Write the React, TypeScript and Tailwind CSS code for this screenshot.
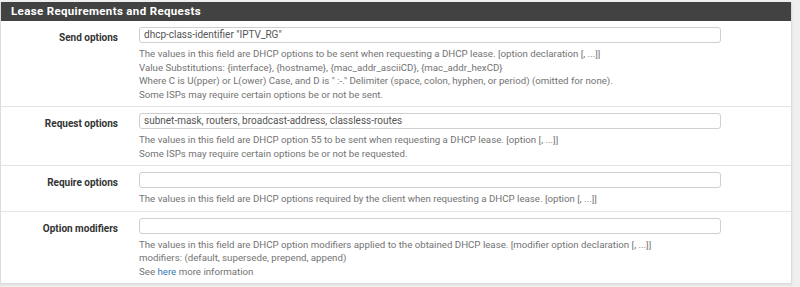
import React from "react";

const font = { fontFamily: "Roboto, 'Noto Sans', sans-serif" };

function Row({
  label,
  value,
  children,
  last,
}: {
  label: string;
  value?: string;
  children: React.ReactNode;
  last?: boolean;
}) {
  return (
    <div className={`flex pt-[6px] pb-[5px] ${last ? "" : "border-b border-[#e4e4e4]"}`}>
      <div className="w-[138px] shrink-0 pr-[21px] pt-[4px] text-right text-[10px] leading-[13.5px] font-bold text-[#333]">
        {label}
      </div>
      <div className="flex flex-col">
        <div className="w-[582px] h-[16px] border border-[#cfcfcf] rounded-[3px] bg-white px-[4px] text-[10px] leading-[14px] text-[#555] overflow-hidden whitespace-nowrap">
          {value}
        </div>
        <div className="mt-[4px] text-[9.7px] leading-[13.5px] text-[#737373]">{children}</div>
      </div>
    </div>
  );
}

export default function App() {
  return (
    <div className="w-[800px] h-[287px] bg-[#efefef] overflow-hidden pt-[2px]" style={font}>
      <div className="w-[792px] bg-white border-l border-r border-b border-[#dcdcdc] shadow-[0_1px_2px_rgba(0,0,0,0.08)]">
        <div className="h-[19px] bg-[#424242] pl-[10px] flex items-center text-white text-[11.5px] font-bold tracking-[0.35px]">
          Lease Requirements and Requests
        </div>
        <Row label="Send options" value={'dhcp-class-identifier "IPTV_RG"'}>
          <div>The values in this field are DHCP options to be sent when requesting a DHCP lease. [option declaration [, ...]]</div>
          <div>Value Substitutions: {"{interface}"}, {"{hostname}"}, {"{mac_addr_asciiCD}"}, {"{mac_addr_hexCD}"}</div>
          <div>Where C is U(pper) or L(ower) Case, and D is " :-." Delimiter (space, colon, hyphen, or period) (omitted for none).</div>
          <div>Some ISPs may require certain options be or not be sent.</div>
        </Row>
        <Row label="Request options" value="subnet-mask, routers, broadcast-address, classless-routes">
          <div>The values in this field are DHCP option 55 to be sent when requesting a DHCP lease. [option [, ...]]</div>
          <div>Some ISPs may require certain options be or not be requested.</div>
        </Row>
        <Row label="Require options">
          <div>The values in this field are DHCP options required by the client when requesting a DHCP lease. [option [, ...]]</div>
        </Row>
        <Row label="Option modifiers" last>
          <div>The values in this field are DHCP option modifiers applied to the obtained DHCP lease. [modifier option declaration [, ...]]</div>
          <div>modifiers: (default, supersede, prepend, append)</div>
          <div>
            See <span className="text-[#337ab7]">here</span> more information
          </div>
        </Row>
      </div>
      <div className="mt-[8px] w-[792px] h-[19px] bg-[#424242]" />
    </div>
  );
}
